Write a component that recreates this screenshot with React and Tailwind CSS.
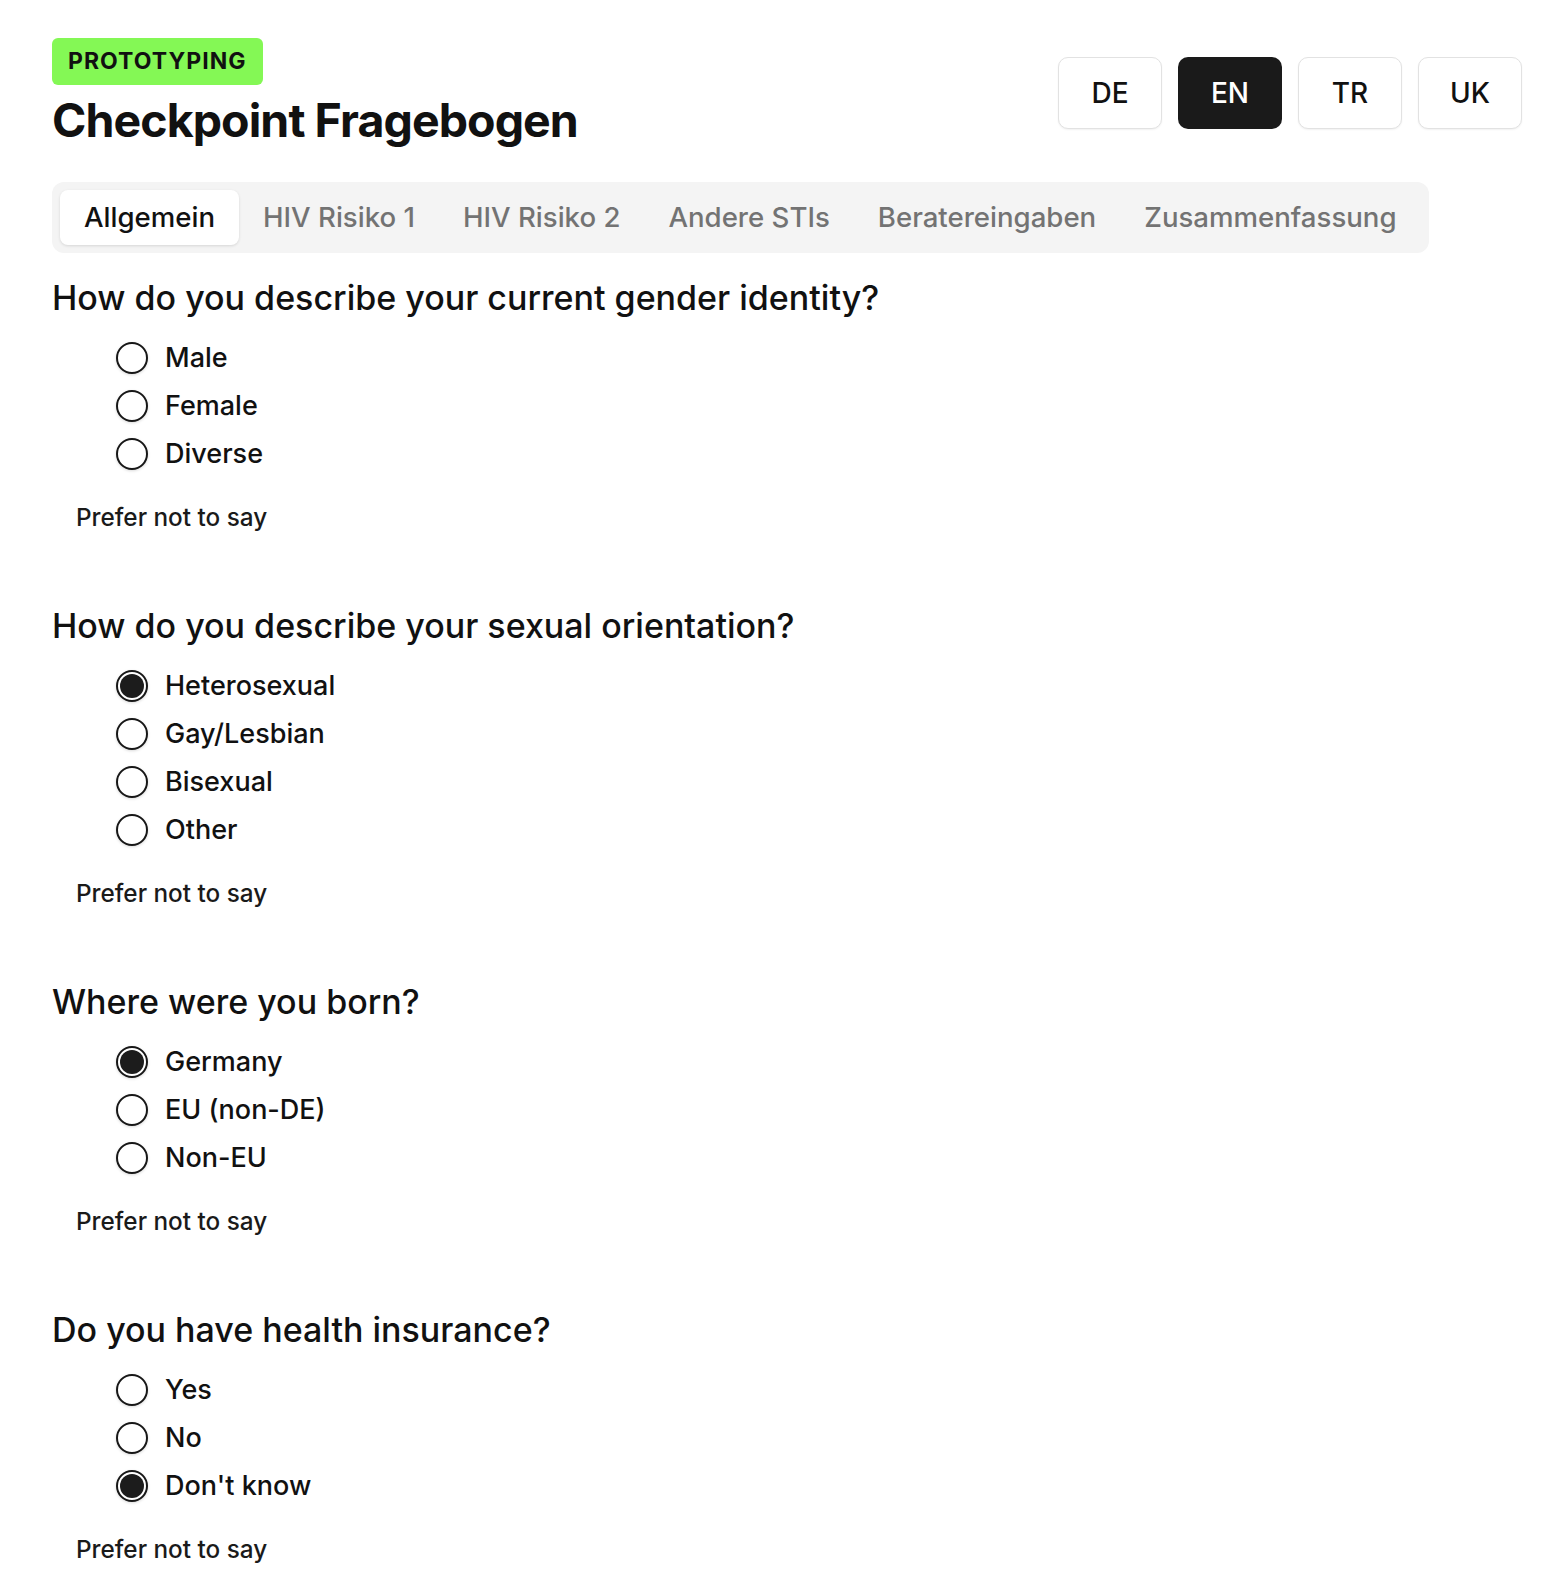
const tabs = ['Allgemein', 'HIV Risiko 1', 'HIV Risiko 2', 'Andere STIs', 'Beratereingaben', 'Zusammenfassung']
const langs = ['DE', 'EN', 'TR', 'UK']

const questions = [
  {
    title: 'How do you describe your current gender identity?',
    options: ['Male', 'Female', 'Diverse'],
    selected: null,
  },
  {
    title: 'How do you describe your sexual orientation?',
    options: ['Heterosexual', 'Gay/Lesbian', 'Bisexual', 'Other'],
    selected: 'Heterosexual',
  },
  {
    title: 'Where were you born?',
    options: ['Germany', 'EU (non-DE)', 'Non-EU'],
    selected: 'Germany',
  },
  {
    title: 'Do you have health insurance?',
    options: ['Yes', 'No', "Don't know"],
    selected: "Don't know",
  },
]

function Radio({ checked }) {
  return (
    <span className="w-8 h-8 rounded-full border-2 border-[#171717] p-[2px] shadow-[0_1px_3px_rgba(0,0,0,0.15)] bg-white flex-shrink-0">
      {checked && <span className="block w-full h-full rounded-full bg-[#1c1c1c]" />}
    </span>
  )
}

function Question({ q }) {
  return (
    <section className="mb-[65px]">
      <h2 className="text-[34px] leading-[40px] font-medium text-[#111]">{q.title}</h2>
      <div className="mt-4 pl-16 flex flex-col">
        {q.options.map((opt) => (
          <label key={opt} className="h-12 flex items-center gap-[17px]">
            <Radio checked={q.selected === opt} />
            <span className="text-[27px] font-medium text-[#111]">{opt}</span>
          </label>
        ))}
      </div>
      <button className="mt-[15px] h-12 px-6 rounded-lg text-[24.3px] font-medium text-[#1a1a1a]">
        Prefer not to say
      </button>
    </section>
  )
}

export default function App() {
  return (
    <div className="min-h-screen bg-white px-[52px] pt-[38px] pr-[34px]" style={{ fontFamily: 'Inter, "Noto Sans", sans-serif' }}>
      <header className="flex items-center justify-between">
        <div className="flex flex-col items-start">
          <span className="bg-[#84f855] rounded-md px-4 h-[47px] flex items-center text-[23px] font-bold tracking-[0.045em] text-[#111]">
            PROTOTYPING
          </span>
          <h1 className="mt-[7px] text-[46.5px] leading-[56px] font-bold tracking-[-0.02em] text-[#111]">
            Checkpoint Fragebogen
          </h1>
        </div>
        <div className="flex gap-4">
          {langs.map((l) => (
            <button
              key={l}
              className={
                l === 'EN'
                  ? 'w-[104px] h-[72px] rounded-[10px] bg-[#1a1a1a] text-white text-[28px] font-medium'
                  : 'w-[104px] h-[72px] rounded-[10px] bg-white border border-[#e2e2e2] shadow-[0_1px_2px_rgba(0,0,0,0.06)] text-[#111] text-[28px] font-medium'
              }
            >
              {l}
            </button>
          ))}
        </div>
      </header>

      <nav className="mt-[34px] inline-flex bg-[#f4f4f4] rounded-xl p-2">
        {tabs.map((t, i) => (
          <button
            key={t}
            className={
              i === 0
                ? 'h-[55px] px-6 rounded-lg bg-white shadow-[0_1px_3px_rgba(0,0,0,0.12)] text-[27.6px] font-medium text-[#111]'
                : 'h-[55px] px-6 rounded-lg text-[27.6px] font-medium text-[#737373]'
            }
          >
            {t}
          </button>
        ))}
      </nav>

      <main className="mt-[25px]">
        {questions.map((q) => (
          <Question key={q.title} q={q} />
        ))}
      </main>
    </div>
  )
}
